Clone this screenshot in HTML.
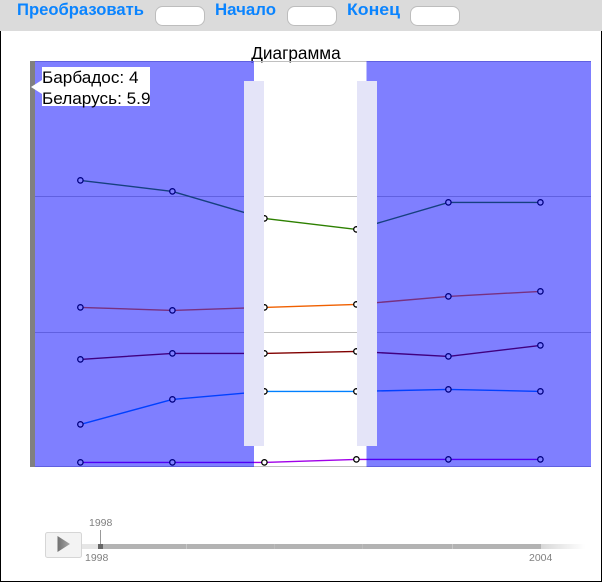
<!DOCTYPE html>
<html><head><meta charset="utf-8">
<style>
html,body{margin:0;padding:0;background:#fff;width:602px;height:582px;overflow:hidden}
svg{display:block;font-family:"Liberation Sans",sans-serif}
</style></head><body>
<svg width="602" height="582" viewBox="0 0 602 582" xmlns="http://www.w3.org/2000/svg">
<defs>
<linearGradient id="fade" x1="0" x2="1" y1="0" y2="0"><stop offset="0" stop-color="#d8d8d8"/><stop offset="1" stop-color="#fff"/></linearGradient>
<linearGradient id="tri" x1="0" x2="1" y1="0" y2="0"><stop offset="0" stop-color="#707070"/><stop offset="1" stop-color="#a8a8a8"/></linearGradient>
</defs>
<rect width="602" height="582" fill="#fff"/>
<!-- toolbar -->
<rect x="0" y="0" width="602" height="31" fill="#dbdbdb"/>
<g font-size="17" font-weight="bold" fill="#0a84ff">
<text x="17" y="15" textLength="127" lengthAdjust="spacingAndGlyphs">Преобразовать</text>
<text x="215" y="15" textLength="61" lengthAdjust="spacingAndGlyphs">Начало</text>
<text x="347" y="15" textLength="53" lengthAdjust="spacingAndGlyphs">Конец</text>
</g>
<g fill="#fff" stroke="#bdbdbd" stroke-width="1">
<rect x="155.5" y="6.5" width="49" height="19" rx="7"/>
<rect x="287.5" y="6.5" width="49" height="19" rx="7"/>
<rect x="410.5" y="6.5" width="49" height="19" rx="7"/>
</g>
<text x="296" y="59" font-size="17.2" text-anchor="middle" fill="#000">Диаграмма</text>
<!-- plot -->
<g>
<line x1="30" x2="591" y1="61.5" y2="61.5" stroke="#c0c0c0"/>
<line x1="30" x2="591" y1="196.5" y2="196.5" stroke="#c0c0c0"/>
<line x1="30" x2="591" y1="332.5" y2="332.5" stroke="#c0c0c0"/>
<line x1="30" x2="591" y1="466.5" y2="466.5" stroke="#c0c0c0"/>
<g fill="none" stroke-width="1.4" transform="translate(.4 .4)">
<polyline points="80,180 172,191 264,218 356,229 448,202 540,202" stroke="#2d8000"/>
<polyline points="80,307 172,310 264,307 356,304 448,296 540,291" stroke="#f06000"/>
<polyline points="80,359 172,353 264,353 356,351 448,356 540,345" stroke="#800000"/>
<polyline points="80,424 172,399 264,391 356,391 448,389 540,391" stroke="#0080ff"/>
<polyline points="80,462 172,462 264,462 356,459 448,459 540,459" stroke="#a000e8"/>
</g>
<g fill="#fff" stroke="#000" stroke-width="1.3" transform="translate(.4 .4)">
<circle cx="80" cy="180" r="2.7"/><circle cx="172" cy="191" r="2.7"/><circle cx="264" cy="218" r="2.7"/><circle cx="356" cy="229" r="2.7"/><circle cx="448" cy="202" r="2.7"/><circle cx="540" cy="202" r="2.7"/>
<circle cx="80" cy="307" r="2.7"/><circle cx="172" cy="310" r="2.7"/><circle cx="264" cy="307" r="2.7"/><circle cx="356" cy="304" r="2.7"/><circle cx="448" cy="296" r="2.7"/><circle cx="540" cy="291" r="2.7"/>
<circle cx="80" cy="359" r="2.7"/><circle cx="172" cy="353" r="2.7"/><circle cx="264" cy="353" r="2.7"/><circle cx="356" cy="351" r="2.7"/><circle cx="448" cy="356" r="2.7"/><circle cx="540" cy="345" r="2.7"/>
<circle cx="80" cy="424" r="2.7"/><circle cx="172" cy="399" r="2.7"/><circle cx="264" cy="391" r="2.7"/><circle cx="356" cy="391" r="2.7"/><circle cx="448" cy="389" r="2.7"/><circle cx="540" cy="391" r="2.7"/>
<circle cx="80" cy="462" r="2.7"/><circle cx="172" cy="462" r="2.7"/><circle cx="264" cy="462" r="2.7"/><circle cx="356" cy="459" r="2.7"/><circle cx="448" cy="459" r="2.7"/><circle cx="540" cy="459" r="2.7"/>
</g>
</g>
<!-- range overlay -->
<rect x="35" y="61" width="219" height="406" fill="#0000ff" fill-opacity=".5"/>
<rect x="366.5" y="61" width="224.5" height="406" fill="#0000ff" fill-opacity=".5"/>
<rect x="30" y="61" width="5" height="406" fill="#808080"/>
<!-- handles -->
<rect x="244" y="81" width="20" height="365" fill="#e4e4f8"/>
<rect x="357" y="81" width="20" height="365" fill="#e4e4f8"/>
<!-- tooltip -->
<rect x="42" y="67" width="108" height="39" fill="#fff"/>
<polygon points="31,87 42,80 42,94" fill="#fff"/>
<g font-size="17" fill="#000">
<text x="42" y="83" textLength="96.5" lengthAdjust="spacingAndGlyphs">Барбадос: 4</text>
<text x="42" y="104" textLength="108.5" lengthAdjust="spacingAndGlyphs">Беларусь: 5.9</text>
</g>
<!-- timeline -->
<rect x="82" y="544" width="16" height="5" fill="#e6e6e6"/>
<rect x="98" y="544" width="443" height="5" fill="#b3b3b3"/>
<rect x="541" y="544" width="44" height="5" fill="url(#fade)"/>
<rect x="186" y="544" width="1" height="5" fill="#c8c8c8"/>
<rect x="274" y="544" width="1" height="5" fill="#bdbdbd"/>
<rect x="362" y="544" width="1" height="5" fill="#bdbdbd"/>
<rect x="452" y="544" width="1" height="5" fill="#c8c8c8"/>
<rect x="98" y="544" width="5" height="5" fill="#666"/>
<rect x="100" y="530" width="1" height="14" fill="#999"/>
<rect x="45.5" y="532.5" width="36" height="25" rx="2" fill="#f3f3f3" stroke="#d6d6d6"/>
<polygon points="57.5,536 57.5,552 70,544" fill="url(#tri)"/>
<g font-size="10.5" fill="#808080">
<text x="89" y="526">1998</text>
<text x="85" y="561">1998</text>
<text x="529" y="561">2004</text>
</g>
<!-- page border -->
<rect x="0" y="31" width="1" height="551" fill="#000"/>
<rect x="601" y="31" width="1" height="551" fill="#000"/>
<rect x="0" y="581" width="602" height="1" fill="#000"/>
</svg>
</body></html>
